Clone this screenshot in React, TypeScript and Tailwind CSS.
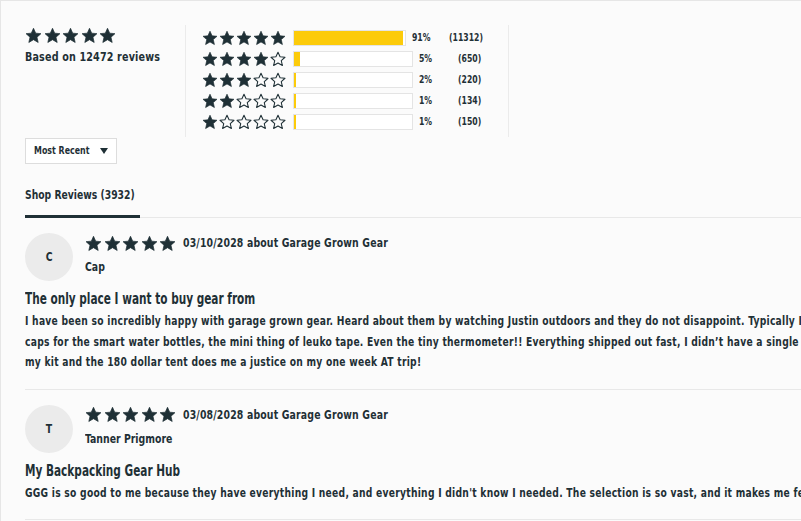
import React from 'react';

const font = { fontFamily: '"DejaVu Sans Condensed", "DejaVu Sans", "Liberation Sans", sans-serif' };

// condensed look: the shop font is narrow, so squeeze the glyphs horizontally
function Sq({ children, cls = 'scale-x-[0.8]' }: { children: React.ReactNode; cls?: string }) {
  return <span className={`inline-block origin-left whitespace-nowrap ${cls}`}>{children}</span>;
}

function Star({ filled, size }: { filled: boolean; size: number }) {
  return (
    <svg width={size} height={size} viewBox="0 0 24 24" className="shrink-0">
      <path
        d="M12 1.8l3.1 6.9 7.4.7-5.6 5 1.7 7.4L12 17.9l-6.6 3.9 1.7-7.4-5.6-5 7.4-.7z"
        fill={filled ? '#1f3036' : 'none'}
        stroke="#1f3036"
        strokeWidth={filled ? 1 : 1.6}
        strokeLinejoin="round"
      />
    </svg>
  );
}

function Stars({ n, size, gap }: { n: number; size: number; gap: string }) {
  return (
    <div className={`flex items-center ${gap}`}>
      {[0, 1, 2, 3, 4].map((i) => (
        <Star key={i} filled={i < n} size={size} />
      ))}
    </div>
  );
}

const rows = [
  { stars: 5, pct: 91, label: '91%', count: '(11312)' },
  { stars: 4, pct: 5, label: '5%', count: '(650)' },
  { stars: 3, pct: 2, label: '2%', count: '(220)' },
  { stars: 2, pct: 1, label: '1%', count: '(134)' },
  { stars: 1, pct: 1, label: '1%', count: '(150)' },
];

const reviews = [
  {
    initial: 'C',
    date: '03/10/2028',
    name: 'Cap',
    title: 'The only place I want to buy gear from',
    lines: [
      'I have been so incredibly happy with garage grown gear. Heard about them by watching Justin outdoors and they do not disappoint. Typically I get my gear here',
      'caps for the smart water bottles, the mini thing of leuko tape. Even the tiny thermometer!! Everything shipped out fast, I didn\u2019t have a single problem with my order',
      'my kit and the 180 dollar tent does me a justice on my one week AT trip!',
    ],
  },
  {
    initial: 'T',
    date: '03/08/2028',
    name: 'Tanner Prigmore',
    title: 'My Backpacking Gear Hub',
    lines: [
      "GGG is so good to me because they have everything I need, and everything I didn't know I needed. The selection is so vast, and it makes me feel at home",
    ],
  },
];

export default function App() {
  return (
    <div
      className="w-[801px] h-[521px] overflow-hidden bg-[#fbfbfb] border-t border-l border-[#e6e6e6] pl-[24px] pt-[24px] text-[#1f3036]"
      style={font}
    >
      {/* Summary */}
      <div className="flex">
        <div className="w-[160px] pt-[2px]">
          <Stars n={5} size={17} gap="gap-[1.5px]" />
          <div className="text-[13px] font-bold leading-[18px] mt-[4px] tracking-[0.2px]">
            <Sq cls="scale-x-[0.82]">Based on 12472 reviews</Sq>
          </div>
        </div>
        <div className="border-l border-r border-[#ebebeb] pl-[16px] pr-[16px] pt-[5px] pb-[7px] w-[324px]">
          {rows.map((r) => (
            <div key={r.stars} className="flex items-center h-[16px] mb-[5px] last:mb-0">
              <Stars n={r.stars} size={16} gap="gap-[1px]" />
              <div className="ml-[7px] w-[120px] h-[16px] border border-[#e4e4e4] bg-white">
                <div className="h-full bg-[#fccb0a]" style={{ width: `${Math.max(Math.round(r.pct * 1.2), 2)}px` }} />
              </div>
              <div className="ml-[6px] w-[39px] text-[11px] font-bold leading-[16px]">
                <Sq cls="scale-x-[0.78]">{r.label}</Sq>
              </div>
              <div className="text-[11px] font-bold leading-[16px]">
                <Sq cls="scale-x-[0.78]">{r.count}</Sq>
              </div>
            </div>
          ))}
        </div>
      </div>

      {/* Sort */}
      <div className="mt-[1px] w-[92px] h-[26px] border border-[#dddddd] bg-white flex items-center justify-between pl-[8px] pr-[8px]">
        <span className="text-[11px] font-bold leading-[14px] w-[60px]">
          <Sq cls="scale-x-[0.8]">Most Recent</Sq>
        </span>
        <svg width="8" height="6" viewBox="0 0 8 6">
          <path d="M0 0h8L4 6z" fill="#1f3036" />
        </svg>
      </div>

      {/* Tabs */}
      <div className="mt-[18px] flex border-b border-[#e8e8e8]">
        <div className="border-b-[3px] border-[#1f3036] pb-[9px] -mb-px w-[115px]">
          <span className="text-[13px] font-bold leading-[16px]">
            <Sq cls="scale-x-[0.79]">Shop Reviews (3932)</Sq>
          </span>
        </div>
      </div>

      {/* Reviews */}
      {reviews.map((rv, idx) => (
        <div key={idx} className="border-b border-[#e8e8e8] pt-[15px] pb-[16px]">
          <div className="flex gap-[12px]">
            <div className="w-[48px] h-[48px] rounded-full bg-[#ebebeb] flex items-center justify-center text-[13px] font-bold">
              <span className="inline-block scale-x-[0.8]">{rv.initial}</span>
            </div>
            <div>
              <div className="flex items-center h-[20px]">
                <Stars n={5} size={17} gap="gap-[1.5px]" />
                <span className="ml-[7px] text-[13px] font-bold tracking-[0.2px]">
                  <Sq cls="scale-x-[0.8]">{rv.date} about Garage Grown Gear</Sq>
                </span>
              </div>
              <div className="mt-[4px] h-[20px] flex items-center text-[13px] font-bold">
                <Sq cls="scale-x-[0.8]">{rv.name}</Sq>
              </div>
            </div>
          </div>
          <div className="mt-[8px] text-[15px] font-bold leading-[20px]">
            <Sq cls="scale-x-[0.78]">{rv.title}</Sq>
          </div>
          <div className="mt-[2px] text-[12px] font-bold leading-[20.5px] tracking-[0.3px]">
            {rv.lines.map((l, i) => (
              <div key={i}>
                <Sq cls="scale-x-[0.85]">{l}</Sq>
              </div>
            ))}
          </div>
        </div>
      ))}
    </div>
  );
}
